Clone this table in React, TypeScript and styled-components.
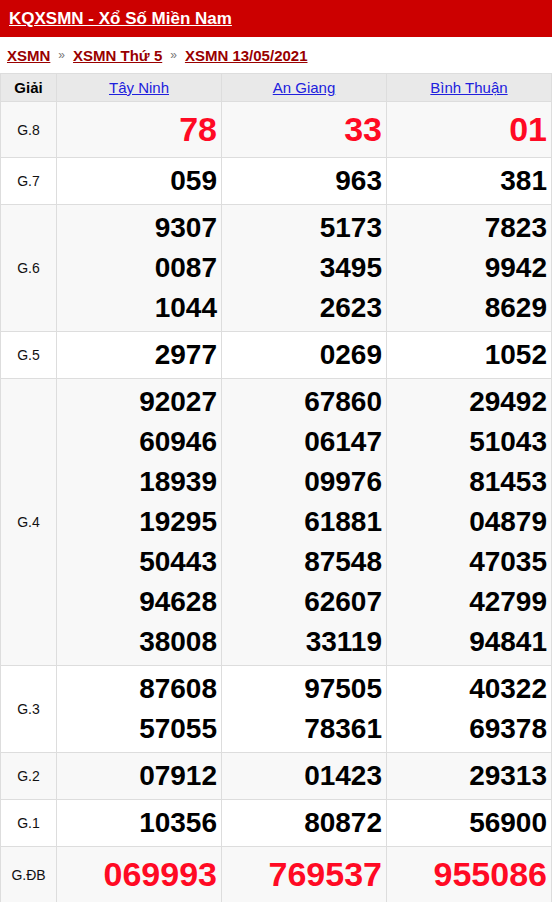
import * as React from 'react'
import styled, { createGlobalStyle } from 'styled-components';

const GlobalStyle = createGlobalStyle`
    html, body {
        margin: 0;
        padding: 0;
        background: #fff;
        font-family: "Liberation Sans", Arial, sans-serif;
    }
`

const STATIONS = ['Tây Ninh', 'An Giang', 'Bình Thuận'];

interface Prize {
    label: string
    big?: boolean
    results: string[][]
}

const PRIZES: Prize[] = [
    { label: 'G.8', big: true, results: [['78'], ['33'], ['01']] },
    { label: 'G.7', results: [['059'], ['963'], ['381']] },
    { label: 'G.6', results: [['9307', '0087', '1044'], ['5173', '3495', '2623'], ['7823', '9942', '8629']] },
    { label: 'G.5', results: [['2977'], ['0269'], ['1052']] },
    {
        label: 'G.4', results: [
            ['92027', '60946', '18939', '19295', '50443', '94628', '38008'],
            ['67860', '06147', '09976', '61881', '87548', '62607', '33119'],
            ['29492', '51043', '81453', '04879', '47035', '42799', '94841'],
        ]
    },
    { label: 'G.3', results: [['87608', '57055'], ['97505', '78361'], ['40322', '69378']] },
    { label: 'G.2', results: [['07912'], ['01423'], ['29313']] },
    { label: 'G.1', results: [['10356'], ['80872'], ['56900']] },
    { label: 'G.ĐB', big: true, results: [['069993'], ['769537'], ['955086']] },
];

export default function App() {
    return (
        <>
            <GlobalStyle />
            <Wrapper>
                <TitleBar>
                    <TitleLink href="#">KQXSMN - Xổ Số Miền Nam</TitleLink>
                </TitleBar>
                <Breadcrumb>
                    <Crumb href="#">XSMN</Crumb>
                    <Sep>»</Sep>
                    <Crumb href="#">XSMN Thứ 5</Crumb>
                    <Sep>»</Sep>
                    <Crumb href="#">XSMN 13/05/2021</Crumb>
                </Breadcrumb>
                <Table>
                    <colgroup>
                        <col style={{ width: 56 }} />
                        <col style={{ width: 165 }} />
                        <col style={{ width: 165 }} />
                        <col style={{ width: 165 }} />
                    </colgroup>
                    <thead>
                        <tr>
                            <HeadCell>Giải</HeadCell>
                            {STATIONS.map(s => (
                                <HeadCell key={s}><StationLink href="#">{s}</StationLink></HeadCell>
                            ))}
                        </tr>
                    </thead>
                    <tbody>
                        {PRIZES.map(p => (
                            <Row key={p.label}>
                                <LabelCell>{p.label}</LabelCell>
                                {p.results.map((nums, i) => (
                                    <NumCell key={i}>
                                        {nums.map((n, j) => (
                                            <Num key={j} $big={p.big}>{n}</Num>
                                        ))}
                                    </NumCell>
                                ))}
                            </Row>
                        ))}
                    </tbody>
                </Table>
            </Wrapper>
        </>
    )
}

const Wrapper = styled.div`
    width: 552px;
`

const TitleBar = styled.h1`
    margin: 0;
    height: 37px;
    background: #cc0000;
    display: flex;
    align-items: center;
    padding: 0 9px;
`

const TitleLink = styled.a`
    color: #fff;
    font-size: 17px;
    font-weight: bold;
    text-decoration: underline;
`

const Breadcrumb = styled.div`
    height: 36px;
    display: flex;
    align-items: center;
    padding: 0 7px;
    gap: 8px;
`

const Crumb = styled.a`
    color: #990000;
    font-size: 15px;
    font-weight: bold;
    text-decoration: underline;
`

const Sep = styled.span`
    color: #777;
    font-size: 12px;
`

const Table = styled.table`
    width: 551px;
    border-collapse: collapse;
    table-layout: fixed;
    border: 1px solid #dddddd;
`

const HeadCell = styled.th`
    background: #e9e9e9;
    border: 1px solid #dddddd;
    height: 27px;
    padding: 0;
    font-size: 15px;
    font-weight: bold;
    color: #000;
    text-align: center;
`

const StationLink = styled.a`
    color: #2020dd;
    font-weight: normal;
    text-decoration: underline;
`

const Row = styled.tr`
    background: #fff;
    &:nth-child(odd) {
        background: #f8f8f8;
    }
`

const LabelCell = styled.td`
    border: 1px solid #dddddd;
    text-align: center;
    font-size: 14px;
    color: #111;
    padding: 3px 0;
`

const NumCell = styled.td`
    border: 1px solid #dddddd;
    text-align: right;
    padding: 3px 4px 3px 4px;
    vertical-align: middle;
`

const Num = styled.div<{ $big?: boolean }>`
    font-weight: bold;
    font-size: ${p => p.$big ? '34px' : '28px'};
    line-height: ${p => p.$big ? '49px' : '40px'};
    color: ${p => p.$big ? '#ff0a24' : '#000'};
`
